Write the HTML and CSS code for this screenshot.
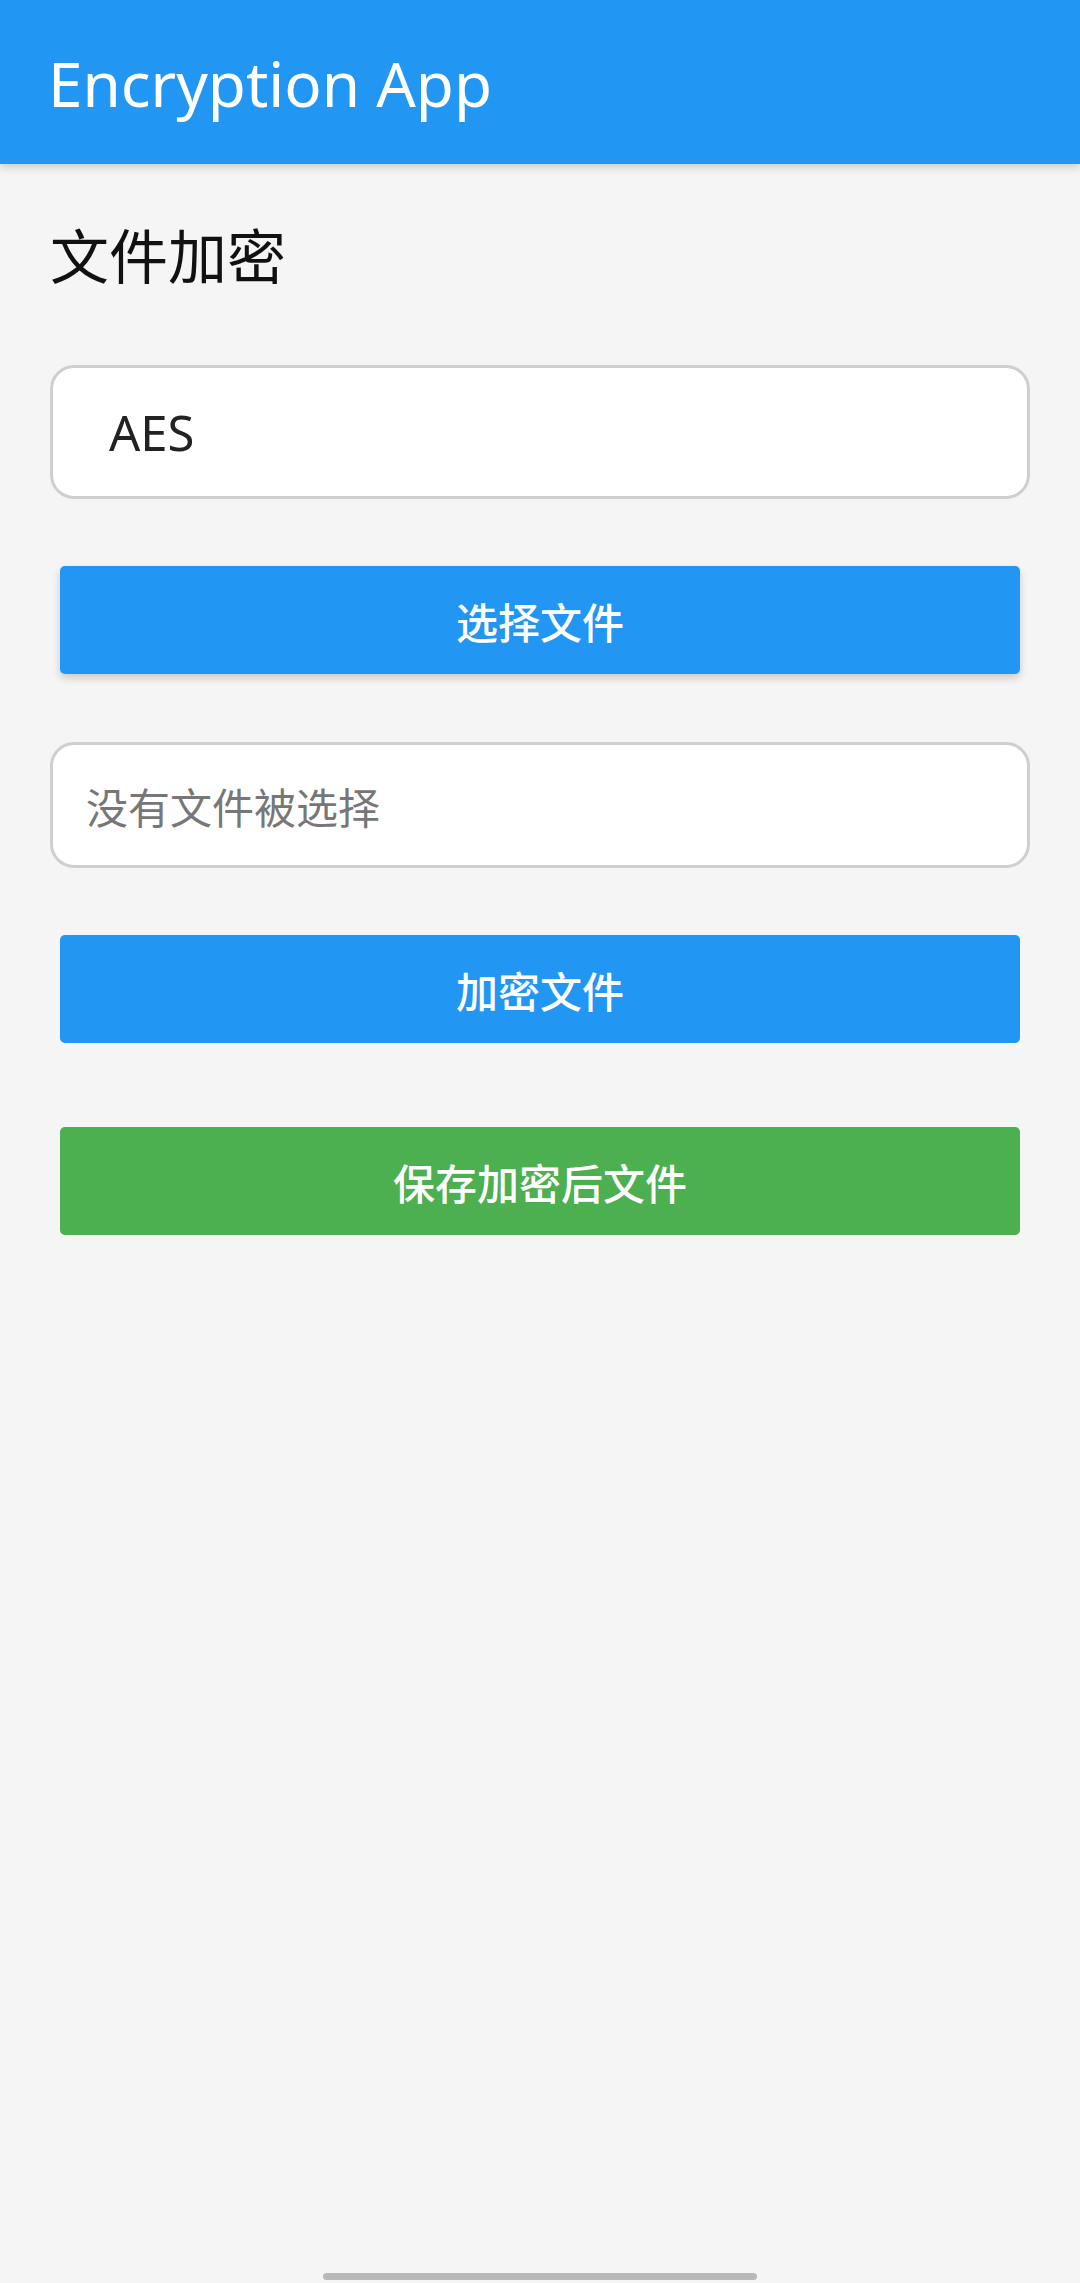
FILE: index.html
```html
<!DOCTYPE html>
<html lang="zh-CN">
<head>
    <meta charset="UTF-8">
    <title>Encryption App</title>
    <link rel="stylesheet" href="styles.css">
</head>
<body>
    <div class="app">
        <header class="topbar">
            <h1 class="topbar-title">Encryption App</h1>
        </header>

        <main class="content">
            <h2 class="section-title">文件加密</h2>

            <div class="field field-select">AES</div>

            <button class="btn btn-blue btn-raised">选择文件</button>

            <div class="field field-file">没有文件被选择</div>

            <button class="btn btn-blue">加密文件</button>

            <button class="btn btn-green">保存加密后文件</button>
        </main>

        <div class="home-bar"></div>
    </div>
</body>
</html>
```

FILE: styles.css
```css
*{
    padding: 0;
    margin: 0;
    box-sizing: border-box;
}
html,body{
    width: 1080px;
    height: 2283px;
    background-color: #f5f5f5;
    font-family: "Noto Sans", "Noto Sans CJK SC", sans-serif;
    overflow: hidden;
}
.app{
    height: 2283px;
    display: flex;
    flex-direction: column;
}
/* 顶部标题栏 */
.topbar{
    height: 164px;
    background-color: #2196f3;
    box-shadow: 0 3px 8px rgba(0,0,0,0.18);
    display: flex;
    align-items: center;
    padding-left: 48px;
    flex-shrink: 0;
}
.topbar-title{
    color: #fff;
    font-size: 62px;
    font-weight: 400;
    line-height: 1;
    margin-top: 2px;
}
.content{
    flex: 1;
    display: flex;
    flex-direction: column;
    padding: 50px 50px 0;
}
.section-title{
    font-family: "Noto Sans CJK SC", sans-serif;
    font-size: 59px;
    font-weight: 400;
    color: #111;
    line-height: 80px;
    margin-bottom: 71px;
}
/* 输入框 */
.field{
    width: 980px;
    background-color: #fff;
    border: 3px solid #cfcfcf;
    border-radius: 24px;
    display: flex;
    align-items: center;
}
.field-select{
    height: 134px;
    padding-left: 56px;
    font-size: 49px;
    color: #222;
}
.field-file{
    height: 126px;
    padding-left: 33px;
    font-family: "Noto Sans CJK SC", sans-serif;
    font-size: 42px;
    color: #777;
    margin-top: 68px;
}
/* 按钮 */
.btn{
    width: 960px;
    height: 108px;
    margin-left: 10px;
    border: none;
    border-radius: 5px;
    color: #fff;
    font-family: "Noto Sans CJK SC", sans-serif;
    font-size: 42px;
    font-weight: 500;
    display: flex;
    align-items: center;
    justify-content: center;
}
.btn-blue{
    background-color: #2196f3;
}
.btn-green{
    background-color: #4caf50;
    margin-top: 84px;
}
.field-select + .btn{
    margin-top: 67px;
}
.field-file + .btn{
    margin-top: 67px;
}
.btn-raised{
    box-shadow: 0 4px 8px rgba(0,0,0,0.18);
}
/* 底部手势条 */
.home-bar{
    width: 434px;
    height: 7px;
    border-radius: 4px;
    background-color: #b9b9b9;
    margin: 0 auto 3px;
    flex-shrink: 0;
}
```
